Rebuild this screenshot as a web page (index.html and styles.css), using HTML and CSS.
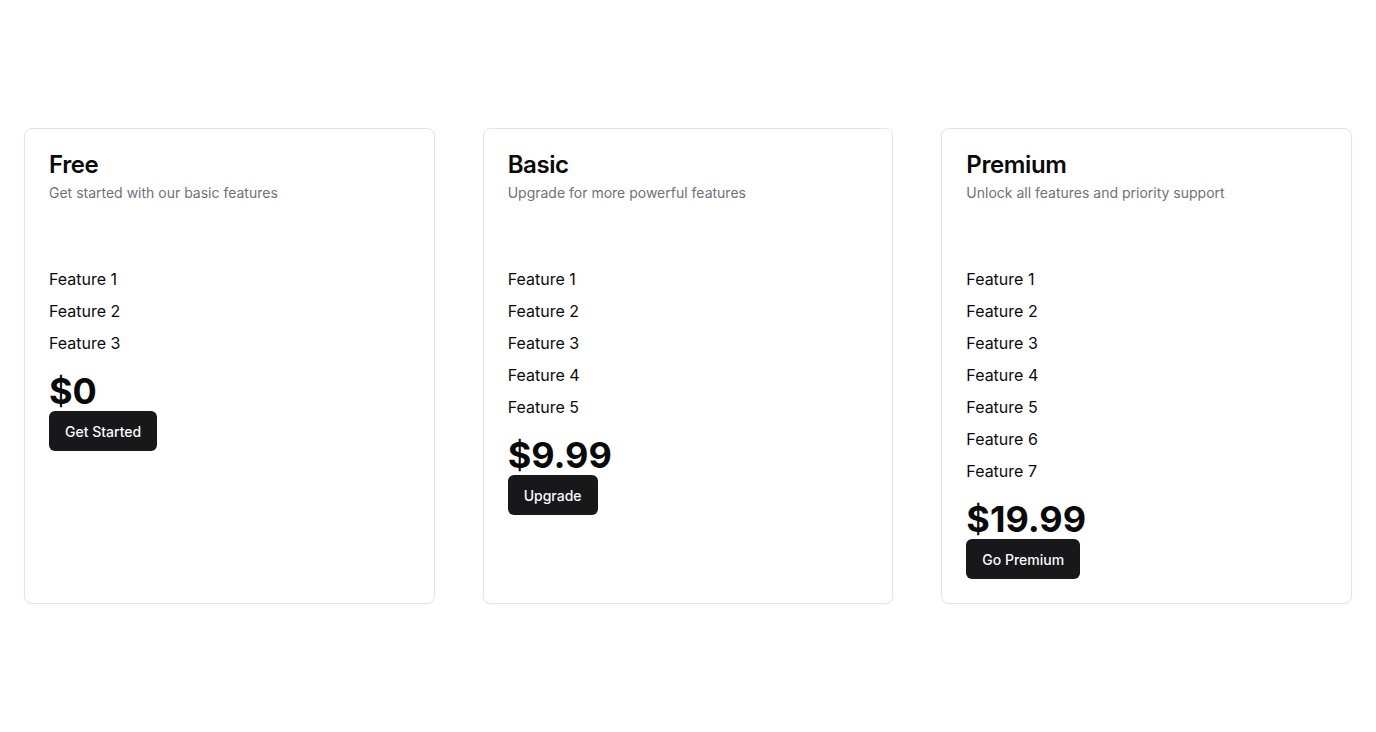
FILE: index.html
```html
<!DOCTYPE html>
<html lang="en">
<head>
<meta charset="utf-8">
<title>Pricing</title>
<link rel="stylesheet" href="styles.css">
</head>
<body>
<main class="page">
  <div class="plans">
    <section class="card">
      <header class="card-header">
        <h2 class="card-title">Free</h2>
        <p class="card-desc">Get started with our basic features</p>
      </header>
      <div class="card-content">
        <ul class="features">
          <li>Feature 1</li>
          <li>Feature 2</li>
          <li>Feature 3</li>
        </ul>
        <div class="price">$0</div>
        <button class="btn">Get Started</button>
      </div>
    </section>
    <section class="card">
      <header class="card-header">
        <h2 class="card-title">Basic</h2>
        <p class="card-desc">Upgrade for more powerful features</p>
      </header>
      <div class="card-content">
        <ul class="features">
          <li>Feature 1</li>
          <li>Feature 2</li>
          <li>Feature 3</li>
          <li>Feature 4</li>
          <li>Feature 5</li>
        </ul>
        <div class="price">$9.99</div>
        <button class="btn">Upgrade</button>
      </div>
    </section>
    <section class="card">
      <header class="card-header">
        <h2 class="card-title">Premium</h2>
        <p class="card-desc">Unlock all features and priority support</p>
      </header>
      <div class="card-content">
        <ul class="features">
          <li>Feature 1</li>
          <li>Feature 2</li>
          <li>Feature 3</li>
          <li>Feature 4</li>
          <li>Feature 5</li>
          <li>Feature 6</li>
          <li>Feature 7</li>
        </ul>
        <div class="price">$19.99</div>
        <button class="btn">Go Premium</button>
      </div>
    </section>
  </div>
</main>
</body>
</html>
```

FILE: styles.css
```css
* { box-sizing: border-box; }
html, body { margin: 0; padding: 0; }
body {
  font-family: Inter, "Liberation Sans", sans-serif;
  color: #0a0a0a;
  background: #fff;
}
.page {
  min-height: 732px;
  display: flex;
  align-items: center;
  padding: 0 24px;
}
.plans {
  flex: 1;
  display: grid;
  grid-template-columns: repeat(3, 1fr);
  gap: 48px;
}
.card {
  border: 1px solid #e4e4e7;
  border-radius: 8px;
  background: #fff;
  box-shadow: 0 1px 2px rgba(0,0,0,0.04);
  display: flex;
  flex-direction: column;
}
.card-header {
  padding: 24px 24px 0;
  display: flex;
  flex-direction: column;
  gap: 6px;
}
.card-title {
  margin: 0;
  font-size: 24px;
  line-height: 24px;
  font-weight: 600;
  letter-spacing: -0.4px;
}
.card-desc {
  margin: 0;
  font-size: 14px;
  line-height: 20px;
  color: #71717a;
}
.card-content {
  padding: 64px 24px 24px;
}
.features {
  list-style: none;
  margin: 0;
  padding: 0;
  display: flex;
  flex-direction: column;
  gap: 8px;
}
.features li {
  font-size: 16px;
  line-height: 24px;
}
.price {
  margin-top: 16px;
  font-size: 36px;
  line-height: 40px;
  font-weight: 700;
}
.btn {
  display: inline-flex;
  align-items: center;
  height: 40px;
  padding: 0 16px;
  border: 0;
  border-radius: 6px;
  background: #18181b;
  color: #fafafa;
  font-family: inherit;
  font-size: 14px;
  font-weight: 500;
}
```
